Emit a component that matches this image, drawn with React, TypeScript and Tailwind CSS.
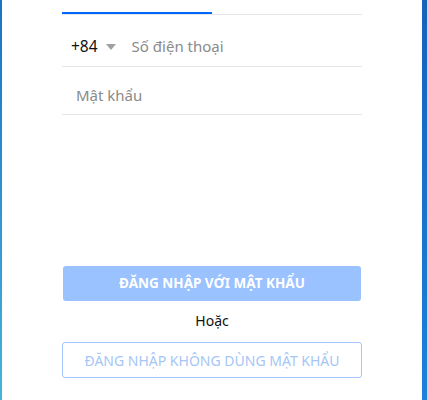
import React from "react";

export default function App() {
  return (
    <div
      className="flex h-[400px] w-[427px] overflow-hidden bg-white"
      style={{ fontFamily: '"Noto Sans", "Open Sans", sans-serif' }}
    >
      <div className="w-[2px] shrink-0 bg-gradient-to-b from-[#1a73c6] to-[#45b4d8]" />
      <div className="flex flex-1 justify-center bg-white">
        <div className="flex w-[300px] flex-col">
          <div className="mt-[12px] flex h-[3px] border-b border-[#e6e6e6]">
            <div className="h-[2px] w-[150px] bg-[#0068ff]" />
          </div>
          <div className="flex h-[52px] items-center border-b border-[#e6e6e6] pl-[9px] pt-[12px]">
            <span className="text-[15.5px] text-[#111]">+84</span>
            <svg width="10" height="6" viewBox="0 0 10 6" className="ml-[8px] mt-[1px]">
              <path d="M0 0 L10 0 L5 6 Z" fill="#a0a0a0" />
            </svg>
            <span className="ml-[16px] text-[15px] text-[#8a8a8a]">Số điện thoại</span>
          </div>
          <div className="flex h-[48px] items-center border-b border-[#e6e6e6] pl-[14px] pt-[10px]">
            <span className="text-[15px] text-[#8a8a8a]">Mật khẩu</span>
          </div>
          <div className="h-[151px]" />
          <button className="mx-[1px] flex h-[35px] items-center justify-center rounded-[3px] bg-[#99c2ff] text-[13.5px] font-bold text-white">
            ĐĂNG NHẬP VỚI MẬT KHẨU
          </button>
          <div className="mt-[10px] text-center text-[14px] font-normal leading-[20px] text-[#111]">Hoặc</div>
          <button className="mt-[11px] flex h-[36px] items-center justify-center rounded-[3px] border border-[#a3c6ff] bg-white text-[14px] text-[#a5c6f6]">
            ĐĂNG NHẬP KHÔNG DÙNG MẬT KHẨU
          </button>
        </div>
      </div>
      <div className="w-[5px] shrink-0 bg-gradient-to-b from-[#1662bd] to-[#1b83da]" />
    </div>
  );
}
